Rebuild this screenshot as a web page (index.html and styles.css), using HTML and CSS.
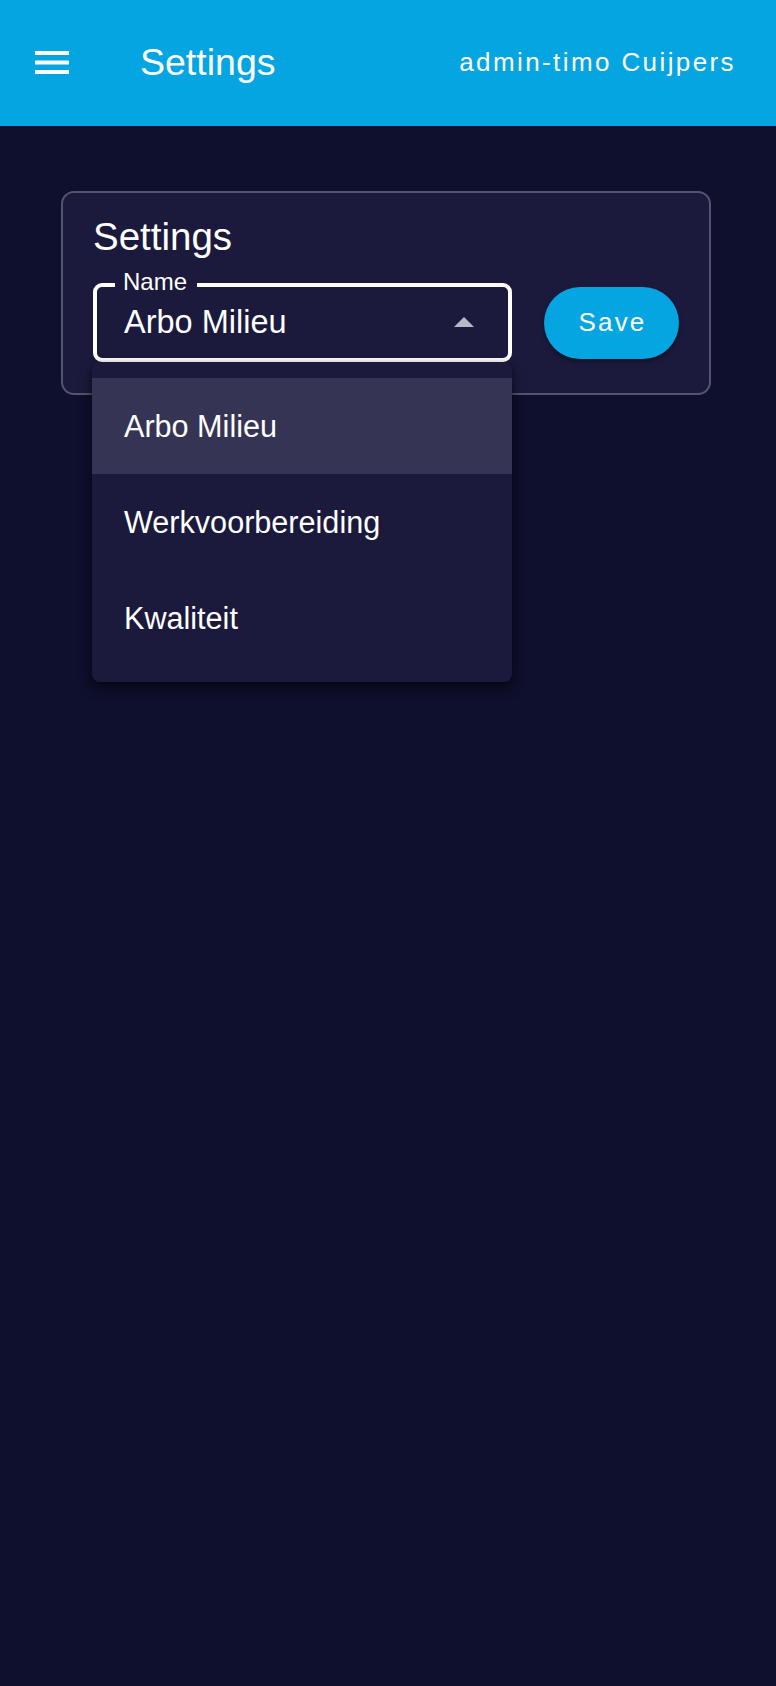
FILE: index.html
```html
<!DOCTYPE html>
<html lang="nl">
<head>
<meta charset="utf-8">
<title>Settings</title>
<link rel="stylesheet" href="styles.css">
</head>
<body>
<header class="appbar">
  <svg class="menu-icon" width="34" height="23" viewBox="0 0 34 23" aria-hidden="true">
    <rect x="0" y="0" width="34" height="4" fill="#fff"/>
    <rect x="0" y="9.5" width="34" height="4" fill="#fff"/>
    <rect x="0" y="19" width="34" height="4" fill="#fff"/>
  </svg>
  <h1 class="appbar-title">Settings</h1>
  <div class="appbar-user">admin-timo Cuijpers</div>
</header>
<main class="content">
  <section class="card">
    <h2 class="card-title">Settings</h2>
    <div class="row">
      <div class="field">
        <span class="field-label">Name</span>
        <span class="field-value">Arbo Milieu</span>
        <span class="field-arrow"></span>
        <ul class="menu">
          <li class="menu-item selected">Arbo Milieu</li>
          <li class="menu-item">Werkvoorbereiding</li>
          <li class="menu-item">Kwaliteit</li>
        </ul>
      </div>
      <button class="save-btn">Save</button>
    </div>
  </section>
</main>
</body>
</html>
```
FILE: styles.css
```css
html, body {
  margin: 0;
  padding: 0;
}
body {
  background: #0f0f2e;
  min-height: 1686px;
  font-family: "Liberation Sans", Arial, sans-serif;
  color: #fff;
}
.appbar {
  height: 126px;
  background: #05a5e2;
  display: flex;
  align-items: center;
  padding: 0 40px 0 35px;
  box-sizing: border-box;
}
.menu-icon {
  display: block;
  flex: none;
  margin-top: -2px;
}
.appbar-title {
  margin: -2px 0 0 71px;
  font-size: 37.5px;
  font-weight: 400;
  line-height: normal;
}
.appbar-user {
  margin-left: auto;
  font-size: 26px;
  letter-spacing: 2.4px;
  margin-top: -2px;
}
.content {
  padding: 65px 0 0 61px;
}
.card {
  width: 650px;
  box-sizing: border-box;
  background: #1b1a3c;
  border: 2px solid #55546f;
  border-radius: 13px;
  padding: 22px 30px 31px 30px;
}
.card-title {
  margin: 0;
  font-size: 38.5px;
  font-weight: 400;
  line-height: normal;
}
.row {
  margin-top: 24px;
  display: flex;
  align-items: center;
  gap: 32px;
}
.field {
  position: relative;
  width: 419px;
  height: 79px;
  box-sizing: border-box;
  border: 4px solid #fff;
  border-radius: 9px;
  display: flex;
  align-items: center;
  padding: 0 34px 0 27px;
}
.field-label {
  position: absolute;
  left: 18px;
  top: -18px;
  font-size: 24px;
  line-height: 26px;
  padding: 0 10px 0 8px;
  background: #1b1a3c;
}
.field-value {
  font-size: 32.5px;
  line-height: normal;
  flex: 1;
}
.field-arrow {
  width: 0;
  height: 0;
  border-left: 10px solid transparent;
  border-right: 10px solid transparent;
  border-bottom: 10px solid #b9b8c6;
  margin-top: -2px;
}
.save-btn {
  width: 135px;
  height: 72px;
  border: none;
  border-radius: 36px;
  background: #05a5e2;
  color: #fff;
  font-family: "Liberation Sans", Arial, sans-serif;
  font-size: 26px;
  letter-spacing: 2.2px;
  padding: 0 0 0 2px;
  box-shadow: 0 3px 4px rgba(0, 0, 0, 0.35);
}
.menu {
  position: absolute;
  left: -5px;
  top: calc(100% + 4px);
  width: 420px;
  margin: 0;
  padding: 16px 0;
  list-style: none;
  background: #1b1a3c;
  border-radius: 8px;
  box-shadow: 0 6px 14px rgba(0, 0, 0, 0.45), 0 2px 6px rgba(0, 0, 0, 0.3);
  z-index: 10;
}
.menu-item {
  height: 96px;
  display: flex;
  align-items: center;
  padding-left: 32px;
  font-size: 30.6px;
}
.menu-item.selected {
  background: #363455;
}
```
